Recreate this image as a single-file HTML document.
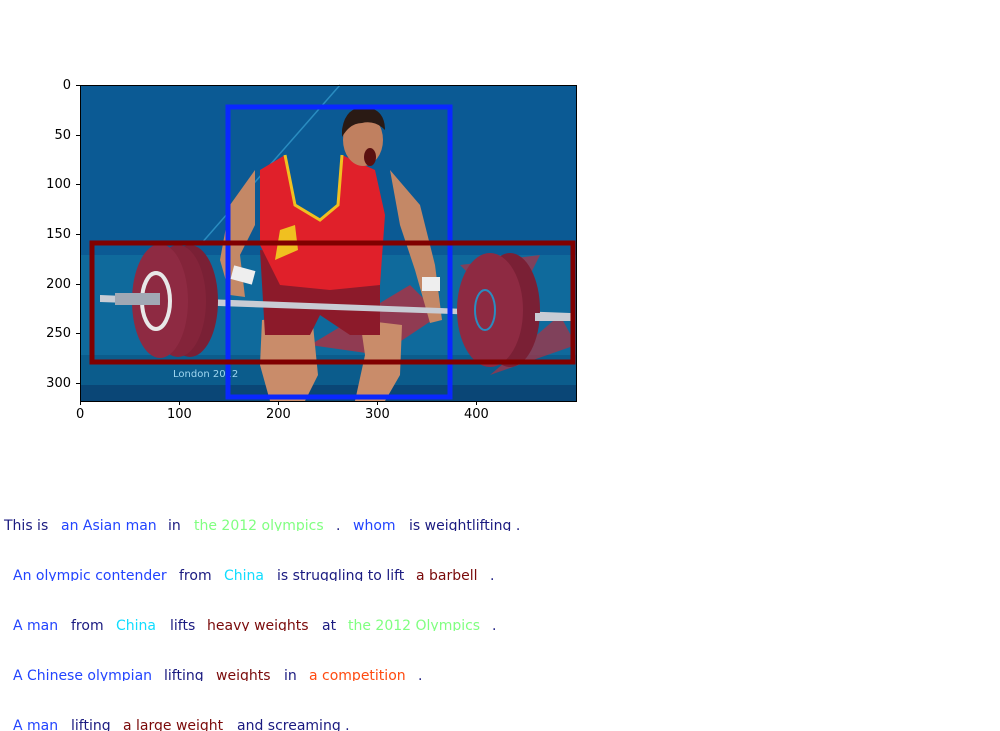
<!DOCTYPE html>
<html><head><meta charset="utf-8"><style>
html,body{margin:0;padding:0;background:#fff;}
body{width:1000px;height:730px;position:relative;overflow:hidden;font-family:"DejaVu Sans","Liberation Sans",sans-serif;}
.t{position:absolute;font-size:13px;color:#000;line-height:15px;}
.yl{text-align:right;width:40px;}
.ln{position:absolute;left:0;width:1000px;height:15px;overflow:hidden;}
.ln span{position:absolute;top:2px;font-size:14px;line-height:16px;white-space:pre;}
.d{color:#1a1a80}.b{color:#2244ff}.g{color:#80ff80}.c{color:#11ddff}.m{color:#7a0a0a}.o{color:#ff4a10}
</style></head><body>
<svg style="position:absolute;left:0;top:0" width="1000" height="730">
<g transform="translate(80,85)">
<rect width="496" height="316" fill="#0b5a94"/>
<rect y="170" width="496" height="110" fill="#0f6a9c"/>
<rect y="270" width="496" height="30" fill="#0b5c8c"/>
<rect y="300" width="496" height="16" fill="#0a4676"/>
<line x1="120" y1="160" x2="260" y2="0" stroke="#2a8cc0" stroke-width="1.5"/>
<polygon points="230,260 330,200 360,230 300,270" fill="#b03040" opacity=".8"/>
<polygon points="380,180 460,170 430,230" fill="#b03040" opacity=".7"/>
<polygon points="410,290 480,230 496,260" fill="#b03040" opacity=".7"/>
<path d="M182,235 L232,230 L238,290 L225,316 L190,316 L180,280 Z" fill="#c98c6a"/>
<path d="M280,235 L322,240 L320,290 L305,316 L275,316 L285,270 Z" fill="#c98c6a"/>
<path d="M180,165 L300,175 L300,250 L270,250 L240,230 L230,250 L185,250 Z" fill="#8c1a2a"/>
<path d="M175,85 L150,120 L140,175 L150,210 L165,212 L160,170 L175,140 Z" fill="#c48866"/>
<path d="M310,85 L340,120 L355,180 L362,235 L350,238 L335,185 L320,140 Z" fill="#c48866"/>
<rect x="152" y="183" width="22" height="14" fill="#eee" transform="rotate(15 163 190)"/>
<rect x="342" y="192" width="18" height="14" fill="#eee"/>
<path d="M180,85 L205,70 L215,120 L240,135 L258,120 L262,70 L295,85 L305,130 L300,200 L250,205 L200,200 L180,160 Z" fill="#e0202a"/>
<path d="M205,70 L215,120 L240,135 L258,120 L262,70" fill="none" stroke="#f0c020" stroke-width="3"/>
<polygon points="200,145 215,140 218,165 195,175" fill="#f0c020"/>
<ellipse cx="283" cy="55" rx="20" ry="26" fill="#c08060"/>
<path d="M262,45 Q265,22 285,22 Q305,24 305,45 Q295,35 282,38 Q270,38 262,52Z" fill="#2a1a14"/>
<ellipse cx="290" cy="72" rx="6" ry="9" fill="#5a1010"/>
<polygon points="20,210 490,228 490,233 20,217" fill="#c8ccd4"/>
<ellipse cx="110" cy="216" rx="28" ry="56" fill="#7a2035"/>
<ellipse cx="98" cy="216" rx="28" ry="56" fill="#84243a"/>
<ellipse cx="80" cy="216" rx="28" ry="57" fill="#8e2a42"/>
<ellipse cx="76" cy="216" rx="14" ry="28" fill="none" stroke="#e8e8e8" stroke-width="4"/>
<rect x="35" y="208" width="45" height="12" fill="#a0a8b4"/>
<ellipse cx="430" cy="225" rx="30" ry="57" fill="#7a2035"/>
<ellipse cx="410" cy="225" rx="33" ry="57" fill="#8e2a42"/>
<ellipse cx="405" cy="225" rx="10" ry="20" fill="none" stroke="#2a8cc0" stroke-width="2"/>
<rect x="455" y="228" width="38" height="8" fill="#c8ccd4"/>
<text x="93" y="292" font-size="10" fill="#9fd6f0" font-family="DejaVu Sans">London 2012</text>
</g>
<rect x="80.5" y="85.5" width="496" height="316" fill="none" stroke="#000" stroke-width="1"/>
<rect x="228" y="107" width="222" height="290" fill="none" stroke="#0a28ff" stroke-width="5"/>
<rect x="92" y="243" width="481" height="119" fill="none" stroke="#800000" stroke-width="5"/>
<g stroke="#000" stroke-width="1">
<line x1="76" y1="85.5" x2="80" y2="85.5"/><line x1="76" y1="135.5" x2="80" y2="135.5"/><line x1="76" y1="184.5" x2="80" y2="184.5"/><line x1="76" y1="234.5" x2="80" y2="234.5"/><line x1="76" y1="284.5" x2="80" y2="284.5"/><line x1="76" y1="333.5" x2="80" y2="333.5"/><line x1="76" y1="383.5" x2="80" y2="383.5"/>
<line x1="80.5" y1="401" x2="80.5" y2="405"/><line x1="179.5" y1="401" x2="179.5" y2="405"/><line x1="278.5" y1="401" x2="278.5" y2="405"/><line x1="377.5" y1="401" x2="377.5" y2="405"/><line x1="476.5" y1="401" x2="476.5" y2="405"/>
</g>
</svg>
<div class="t yl" style="left:31px;top:78px">0</div>
<div class="t yl" style="left:31px;top:128px">50</div>
<div class="t yl" style="left:31px;top:177px">100</div>
<div class="t yl" style="left:31px;top:227px">150</div>
<div class="t yl" style="left:31px;top:277px">200</div>
<div class="t yl" style="left:31px;top:326px">250</div>
<div class="t yl" style="left:31px;top:376px">300</div>
<div class="t" style="left:76px;top:407px">0</div>
<div class="t" style="left:167px;top:407px">100</div>
<div class="t" style="left:266px;top:407px">200</div>
<div class="t" style="left:365px;top:407px">300</div>
<div class="t" style="left:464px;top:407px">400</div>

<div class="ln" style="top:516px"><span class="d" style="left:4px">This is</span><span class="b" style="left:61px">an Asian man</span><span class="d" style="left:168px">in</span><span class="g" style="left:194px">the 2012 olympics</span><span class="d" style="left:336px">.</span><span class="b" style="left:353px">whom</span><span class="d" style="left:409px">is weightlifting .</span></div>
<div class="ln" style="top:566px"><span class="b" style="left:13px">An olympic contender</span><span class="d" style="left:179px">from</span><span class="c" style="left:224px">China</span><span class="d" style="left:277px">is struggling to lift</span><span class="m" style="left:416px">a barbell</span><span class="d" style="left:490px">.</span></div>
<div class="ln" style="top:616px"><span class="b" style="left:13px">A man</span><span class="d" style="left:71px">from</span><span class="c" style="left:116px">China</span><span class="d" style="left:170px">lifts</span><span class="m" style="left:207px">heavy weights</span><span class="d" style="left:322px">at</span><span class="g" style="left:348px">the 2012 Olympics</span><span class="d" style="left:492px">.</span></div>
<div class="ln" style="top:666px"><span class="b" style="left:13px">A Chinese olympian</span><span class="d" style="left:164px">lifting</span><span class="m" style="left:216px">weights</span><span class="d" style="left:284px">in</span><span class="o" style="left:309px">a competition</span><span class="d" style="left:418px">.</span></div>
<div class="ln" style="top:716px"><span class="b" style="left:13px">A man</span><span class="d" style="left:71px">lifting</span><span class="m" style="left:123px">a large weight</span><span class="d" style="left:237px">and screaming .</span></div>
</body></html>
